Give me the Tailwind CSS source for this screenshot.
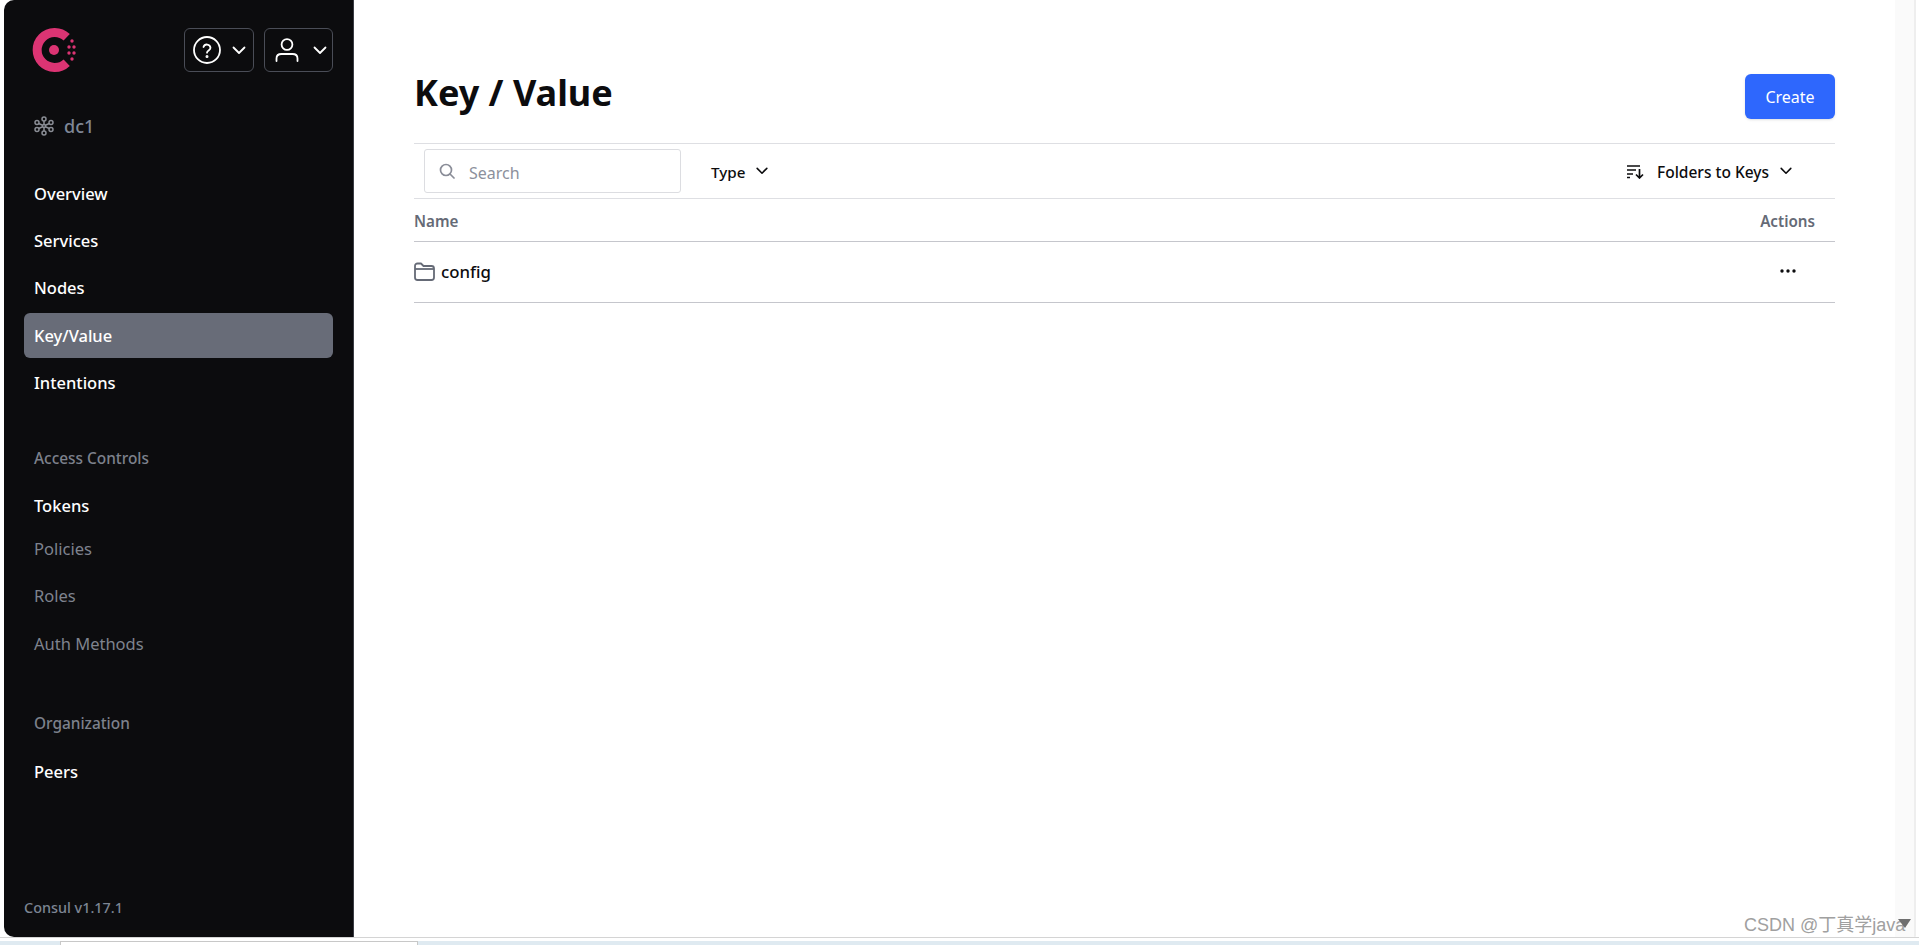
<!DOCTYPE html>
<html lang="en">
<head>
  <meta charset="UTF-8">
  <title>Key / Value - Consul</title>
  <script src="https://cdn.jsdelivr.net/npm/@tailwindcss/browser@4"></script>
</head>
<body class="bg-white font-['Noto_Sans','Open_Sans',sans-serif] overflow-hidden">
  <div class="relative flex flex-col h-[945px]">
    <div class="flex h-[938px] pl-1 border-b border-[#d4d4d4]">
      <!-- sidebar -->
      <aside class="w-[350px] h-full flex flex-col bg-[#0c0c0e] rounded-l-[10px] border-r border-[#3b3d45] pl-5 pr-5">
        <div class="flex items-center h-[44px] mt-7">
          <svg class="w-[46px] h-[44px] ml-2" viewBox="0 0 46 44" fill="#dc3473">
            <path d="M34.700 9.300A17.500 17.500 0 1 0 34.700 34.700" fill="none" stroke="#dc3473" stroke-width="9"/>
            <circle cx="22" cy="22" r="5"/>
            <circle cx="40" cy="13" r="1.700"/>
            <circle cx="37" cy="19" r="1.700"/><circle cx="42" cy="19" r="1.700"/>
            <circle cx="37" cy="25" r="1.700"/><circle cx="42" cy="25" r="1.700"/>
            <circle cx="40" cy="31" r="1.700"/>
          </svg>
          <div class="ml-auto flex gap-[10px]">
            <button class="flex items-center w-[70px] h-[44px] border border-[#4a4d57] rounded-md pl-2">
              <svg class="w-7 h-7" viewBox="0 0 28 28" fill="none" stroke="white" stroke-width="1.800" stroke-linecap="round" stroke-linejoin="round"><circle cx="14" cy="14" r="13"/><path d="M10.500 11a3.600 3.600 0 0 1 7 .8c0 2.400-3.500 2.900-3.500 4.900"/><circle cx="14" cy="20.500" r=".6" fill="white"/></svg>
              <svg class="w-4 h-4 ml-[10px]" viewBox="0 0 16 16" fill="none" stroke="white" stroke-width="1.800" stroke-linecap="round" stroke-linejoin="round"><path d="M2.500 5.500 8 11l5.500-5.500"/></svg>
            </button>
            <button class="flex items-center w-[69px] h-[44px] border border-[#4a4d57] rounded-md pl-[10px]">
              <svg class="w-[24px] h-[26px]" viewBox="0 0 24 26" fill="none" stroke="white" stroke-width="1.800" stroke-linecap="round"><circle cx="12" cy="7.500" r="5.400"/><path d="M1.500 24v-2.500c0-3 2-4.500 5-4.500h11c3 0 5 1.500 5 4.500V24"/></svg>
              <svg class="w-4 h-4 ml-[13px]" viewBox="0 0 16 16" fill="none" stroke="white" stroke-width="1.800" stroke-linecap="round" stroke-linejoin="round"><path d="M2.500 5.500 8 11l5.500-5.500"/></svg>
            </button>
          </div>
        </div>
        <div class="flex items-center mt-[40px] ml-[10px] h-7 text-[#7f8797] text-[18px] font-medium">
          <svg class="w-5 h-5 mr-[10px]" viewBox="0 0 20 20" fill="none" stroke="#8a8d95" stroke-width="1.500"><circle cx="10" cy="3" r="2"/><circle cx="10" cy="17" r="2"/><circle cx="3" cy="6.500" r="2"/><circle cx="17" cy="6.500" r="2"/><circle cx="3" cy="13.500" r="2"/><circle cx="17" cy="13.500" r="2"/><circle cx="10" cy="10" r="1.500"/><path d="M4.700 7.500 8.600 9.200M15.300 7.500 11.400 9.200M4.700 12.500 8.600 10.800M15.300 12.500 11.400 10.800M10 5v3.500M10 11.500V15"/></svg>
          dc1
        </div>
        <nav class="mt-[29px] flex flex-col text-white text-[16.500px] font-medium">
          <a class="flex items-center h-[47.5px] px-[10px] pt-[3px]">Overview</a>
          <a class="flex items-center h-[47.5px] px-[10px] pt-[2px]">Services</a>
          <a class="flex items-center h-[47.5px] px-[10px] pt-[2px]">Nodes</a>
          <a class="flex items-center h-[45px] px-[10px] pt-[2px] my-[1.250px] bg-[#686c78] rounded-md">Key/Value</a>
          <a class="flex items-center h-[47.5px] px-[10px] pt-[2px]">Intentions</a>
          <p class="flex items-center h-5 px-[10px] mt-[42px] text-[15.400px] text-[#7d818c] font-medium">Access Controls</p>
          <a class="flex items-center h-[47.5px] px-[10px] pt-[2px] mt-[13px]">Tokens</a>
          <a class="flex items-center h-[47.5px] px-[10px] pt-[1px] -mt-[4px] text-[#7f838e] font-normal">Policies</a>
          <a class="flex items-center h-[47.5px] px-[10px] text-[#7f838e] font-normal">Roles</a>
          <a class="flex items-center h-[47.5px] px-[10px] pt-[1px] text-[#7f838e] font-normal">Auth Methods</a>
          <p class="flex items-center h-5 px-[10px] mt-[46px] text-[15.400px] text-[#7d818c] font-medium">Organization</p>
          <a class="flex items-center h-[47.5px] px-[10px] mt-[15px]">Peers</a>
        </nav>
        <p class="mt-auto mb-[19px] text-[14.400px] leading-5 font-medium text-[#7d8593]">Consul v1.17.1</p>
      </aside>
      <!-- main -->
      <main class="flex-1 pl-[60px] pr-[60px] text-[#0c0c0e]">
        <div class="flex items-start h-[143px]">
          <h1 class="mt-[65px] text-[36px] leading-[56px] font-bold">Key / Value</h1>
          <button class="ml-auto mt-[74px] w-[90px] h-[45px] bg-[#2e67fd] rounded-md text-white text-[16px] shadow-sm">Create</button>
        </div>
        <div class="flex items-center h-[56px] border-y border-[#dedfe3] pl-[10px] pr-[42px] text-[15.200px] font-medium">
          <div class="flex items-center w-[257px] h-[44px] border border-[#dcdde1] rounded-[3px] pl-[14px]">
            <svg class="w-4 h-4" viewBox="0 0 16 16" fill="none" stroke="#8a8d98" stroke-width="1.700" stroke-linecap="round"><circle cx="7" cy="7" r="5.500"/><path d="m11 11 4 4"/></svg>
            <span class="ml-[14px] pt-[3px] text-[16px] font-normal text-[#8c909c]">Search</span>
          </div>
          <span class="ml-[30px] pt-[2px]">Type</span>
          <svg class="w-[14px] h-[14px] ml-[10px]" viewBox="0 0 16 16" fill="none" stroke="#0c0c0e" stroke-width="1.800" stroke-linecap="round" stroke-linejoin="round"><path d="M2.500 5 8 10.500 13.500 5"/></svg>
          <svg class="w-[18px] h-4 ml-auto" viewBox="0 0 18 16" fill="none" stroke="#0c0c0e" stroke-width="1.700"><path d="M1 3h13M1 7h9M1 11h6M1 14.500h3"/><path d="M13.500 6v9M10 11.500l3.500 3.500 3.500-3.500"/></svg>
          <span class="ml-[13px] pt-[3px] text-[15.500px]">Folders to Keys</span>
          <svg class="w-[14px] h-[14px] ml-[10px]" viewBox="0 0 16 16" fill="none" stroke="#0c0c0e" stroke-width="1.800" stroke-linecap="round" stroke-linejoin="round"><path d="M2.500 5 8 10.500 13.500 5"/></svg>
        </div>
        <div class="flex items-center justify-between h-[43px] pt-[2px] pr-5 border-b border-[#c5c6cc] text-[15.200px] font-semibold text-[#656a76]">
          <span>Name</span>
          <span>Actions</span>
        </div>
        <div class="flex items-center h-[61px] border-b border-[#c5c6cc] pb-[2px]">
          <svg class="w-[21px] h-[19px]" viewBox="0 0 21 19" fill="none" stroke="#656a76" stroke-width="1.800" stroke-linejoin="round"><path d="M1 4a2.500 2.500 0 0 1 2.500-2.500H7l2.500 2.500h8A2.500 2.500 0 0 1 20 6.500v9a2.500 2.500 0 0 1-2.500 2.500h-14A2.500 2.500 0 0 1 1 15.500Z"/><path d="M1 7h19"/></svg>
          <span class="ml-[6px] pt-[1px] text-[16.800px] font-medium">config</span>
          <svg class="ml-auto mr-[39px] w-4 h-1" viewBox="0 0 16 4" fill="#0c0c0e"><circle cx="2" cy="2" r="1.700"/><circle cx="8" cy="2" r="1.700"/><circle cx="14" cy="2" r="1.700"/></svg>
        </div>
      </main>
      <div class="w-[19px] bg-[#fafafa]"></div>
      <div class="w-[5px] border-l-2 border-[#eeeeee] rounded-br-lg"></div>
    </div>
    <div class="flex-1 mt-[3px] bg-[#dfeaf1] pl-[60px]">
      <div class="w-[358px] h-full bg-white border-t border-x border-[#c8c8c8]"></div>
    </div>
    <!-- watermark -->
    <span class="absolute left-[1744px] top-[915px] text-[18px] leading-5 text-[#a0a0a0] font-['Liberation_Sans','Noto_Sans_CJK_SC',sans-serif]">CSDN @丁真学java</span>
    <svg class="absolute left-[1898px] top-[919px] w-[13px] h-[9px]" viewBox="0 0 13 9" fill="#6f6f6f"><path d="M0 0h13L7 9Z"/></svg>
  </div>
</body>
</html>
